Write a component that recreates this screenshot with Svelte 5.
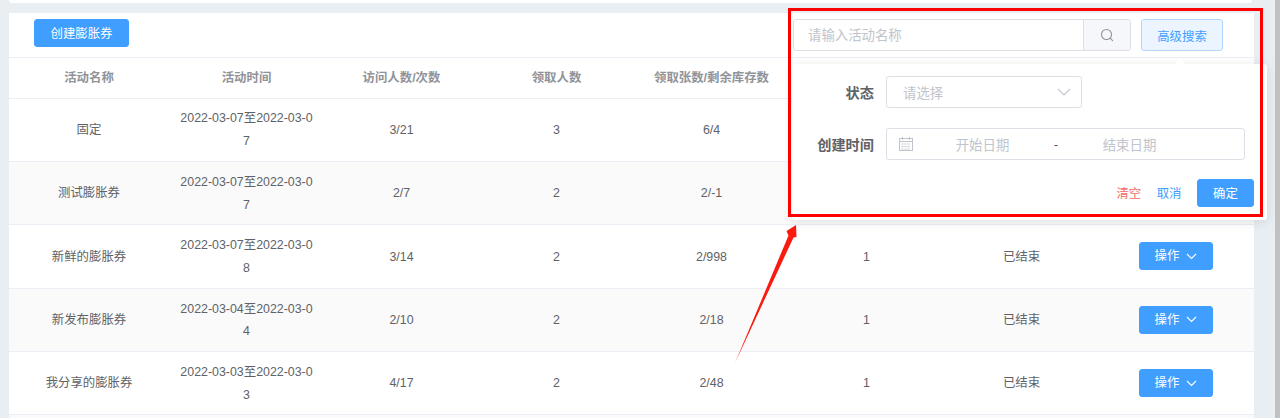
<script>
    const columns = ["活动名称", "活动时间", "访问人数/次数", "领取人数", "领取张数/剩余库存数", "", "", ""];

    const rows = [
        { name: "固定", time: "2022-03-07至2022-03-07", visits: "3/21", people: "3", stock: "6/4" },
        { name: "测试膨胀券", time: "2022-03-07至2022-03-07", visits: "2/7", people: "2", stock: "2/-1" },
        { name: "新鲜的膨胀券", time: "2022-03-07至2022-03-08", visits: "3/14", people: "2", stock: "2/998" },
        { name: "新发布膨胀券", time: "2022-03-04至2022-03-04", visits: "2/10", people: "2", stock: "2/18" },
        { name: "我分享的膨胀券", time: "2022-03-03至2022-03-03", visits: "4/17", people: "2", stock: "2/48" }
    ];
</script>

<div class="page">
    <div class="content">
        <div class="top-strip"></div>

        <section class="card">
            <div class="toolbar">
                <button class="btn primary create">创建膨胀券</button>
                <div class="search-group">
                    <div class="search">
                        <span class="search-input">请输入活动名称</span>
                        <span class="search-append">
                            <svg width="14" height="14" viewBox="0 0 14 14" fill="none" stroke="#8f9399" stroke-width="1.1">
                                <circle cx="6.5" cy="6.5" r="5" />
                                <path d="M10.2 10.2 L12.6 12.6" stroke-linecap="round" />
                            </svg>
                        </span>
                    </div>
                    <button class="btn advanced">高级搜索</button>
                </div>
            </div>

            <div class="row head">
                {#each columns as col}
                    <div class="cell">{col}</div>
                {/each}
            </div>

            {#each rows as row, i}
                <div class="row" class:striped={i % 2 === 1}>
                    <div class="cell">{row.name}</div>
                    <div class="cell">{row.time}</div>
                    <div class="cell">{row.visits}</div>
                    <div class="cell">{row.people}</div>
                    <div class="cell">{row.stock}</div>
                    <div class="cell">1</div>
                    <div class="cell">已结束</div>
                    <div class="cell">
                        <button class="btn primary action">
                            操作
                            <svg width="11" height="7" viewBox="0 0 11 7" fill="none" stroke="#fff" stroke-width="1.1">
                                <path d="M1 1 L5.5 5.5 L10 1" />
                            </svg>
                        </button>
                    </div>
                </div>
            {/each}
            <div class="row striped"></div>

            <!-- Advanced search popover -->
            <div class="popover">
                <div class="form-row">
                    <span class="label">状态</span>
                    <div class="field select">
                        <span>请选择</span>
                        <svg width="14" height="8" viewBox="0 0 14 8" fill="none" stroke="#c0c4cc" stroke-width="1.1">
                            <path d="M1 1 L7 7 L13 1" />
                        </svg>
                    </div>
                </div>
                <div class="form-row">
                    <span class="label">创建时间</span>
                    <div class="field range">
                        <svg width="14" height="14" viewBox="0 0 14 14" fill="none" stroke="#c0c4cc" stroke-width="1">
                            <rect x="0.5" y="1.5" width="13" height="12" />
                            <path d="M0.5 4.5 H13.5 M3.5 0 V3 M10.5 0 V3" />
                            <path d="M2.5 7 H11.5 M2.5 9.5 H11.5 M2.5 12 H11.5" stroke-dasharray="2 1" />
                        </svg>
                        <span class="range-text">开始日期</span>
                        <span class="range-sep">-</span>
                        <span class="range-text">结束日期</span>
                    </div>
                </div>
                <div class="footer">
                    <span class="link danger">清空</span>
                    <span class="link">取消</span>
                    <button class="btn primary confirm">确定</button>
                </div>
            </div>
        </section>
    </div>

    <div class="scrollbar"></div>

    <!-- Red annotation drawn over the screenshot -->
    <div class="mark-box"></div>
    <svg class="mark-arrow" width="70" height="145" viewBox="730 222 70 145">
        <polygon points="735,363 788.5,235.5 786.5,231 796,225 796.5,237 793.5,237.5" fill="#fa1a0f" />
    </svg>
</div>

<style>
    :global(body) {
        margin: 0;
        background: #e9eef3;
        overflow: hidden;
    }

    .page {
        position: relative;
        display: flex;
        height: 418px;
        overflow: hidden;
        font-family: "Liberation Sans", "Noto Sans CJK SC", sans-serif;
        font-size: 12.4px;
        color: #606266;
    }

    .content {
        width: 1275px;
        padding-left: 9px;
        box-sizing: border-box;
    }

    .scrollbar {
        width: 5px;
        background: #c1c1c1;
    }

    .top-strip {
        width: 1243px;
        height: 3px;
        margin-bottom: 10px;
        background: #fff;
        border-radius: 0 0 3px 3px;
    }

    .card {
        position: relative;
        width: 1245px;
        background: #fff;
    }

    /* Toolbar */
    .toolbar {
        display: flex;
        justify-content: space-between;
        align-items: flex-start;
        height: 45px;
        padding: 6px 31px 0 25px;
        box-sizing: border-box;
        border-bottom: 1px solid #ebeef5;
    }

    .btn {
        padding: 0;
        border: 1px solid transparent;
        border-radius: 3px;
        font: inherit;
        box-sizing: border-box;
    }

    .btn.primary {
        background: #409eff;
        border-color: #409eff;
        color: #fff;
    }

    .create {
        width: 95px;
        height: 28px;
    }

    .search-group {
        display: flex;
        gap: 10px;
    }

    .search {
        display: flex;
        width: 338px;
        height: 32px;
        box-sizing: border-box;
        border: 1px solid #dcdfe6;
        border-radius: 3px;
        overflow: hidden;
    }

    .search-input {
        flex: 1;
        padding-left: 14px;
        padding-top: 1px;
        line-height: 30px;
        font-size: 13.4px;
        color: #c0c4cc;
    }

    .search-append {
        display: flex;
        align-items: center;
        justify-content: center;
        width: 47px;
        box-sizing: border-box;
        background: #f5f7fa;
        border-left: 1px solid #dcdfe6;
    }

    .advanced {
        width: 82px;
        height: 32px;
        padding-top: 1px;
        background: #ecf5ff;
        border-color: #b3d8ff;
        color: #409eff;
    }

    /* Table */
    .row {
        display: grid;
        grid-template-columns: 160px repeat(7, 155px);
        height: 63.4px;
        box-sizing: border-box;
        border-bottom: 1px solid #ebeef5;
    }

    .row.head {
        height: 40.5px;
        color: #909399;
        font-weight: 700;
    }

    .row.striped {
        background: #fafafa;
    }

    .cell {
        display: flex;
        align-items: center;
        justify-content: center;
        padding: 1px 10px 0;
        line-height: 22.7px;
        text-align: center;
        word-break: break-all;
    }

    .action {
        display: flex;
        align-items: center;
        justify-content: center;
        gap: 7px;
        width: 74px;
        height: 28px;
        margin: -1px 1px 0 0;
        flex: none;
    }

    /* Popover */
    .popover {
        position: absolute;
        left: 783px;
        top: 51px;
        width: 475px;
        height: 156px;
        padding: 12px 13px 13px 0;
        box-sizing: border-box;
        background: #fff;
        border-radius: 3px;
        box-shadow: 0 2px 12px rgba(0, 0, 0, 0.1);
    }

    .popover::before {
        content: "";
        position: absolute;
        left: 384px;
        top: -4px;
        width: 8px;
        height: 8px;
        background: #fff;
        transform: rotate(45deg);
    }

    .form-row {
        display: flex;
        align-items: center;
        gap: 12px;
        margin-bottom: 20px;
    }

    .label {
        width: 82px;
        text-align: right;
        font-size: 14.2px;
        font-weight: 700;
    }

    .field {
        display: flex;
        align-items: center;
        height: 32px;
        box-sizing: border-box;
        border: 1px solid #dcdfe6;
        border-radius: 3px;
        font-size: 13.4px;
        color: #c0c4cc;
    }

    .select {
        justify-content: space-between;
        width: 196px;
        padding: 0 10px 0 16px;
    }

    .range {
        width: 359px;
        padding: 0 49px 0 12px;
    }

    .range-text {
        flex: 1;
        text-align: center;
    }

    .range-sep {
        width: 16px;
        text-align: center;
        color: #606266;
    }

    .range svg {
        margin-right: 4px;
    }

    .footer {
        display: flex;
        align-items: center;
        justify-content: flex-end;
        gap: 15.5px;
        margin-top: -1px;
    }

    .link {
        color: #409eff;
    }

    .link.danger {
        color: #f56c6c;
    }

    .confirm {
        width: 57px;
        height: 28px;
    }

    /* Annotation */
    .mark-box {
        position: absolute;
        left: 788px;
        top: 8px;
        width: 475px;
        height: 209px;
        box-sizing: border-box;
        border: 3px solid #f00;
    }

    .mark-arrow {
        position: absolute;
        left: 730px;
        top: 222px;
    }
</style>
